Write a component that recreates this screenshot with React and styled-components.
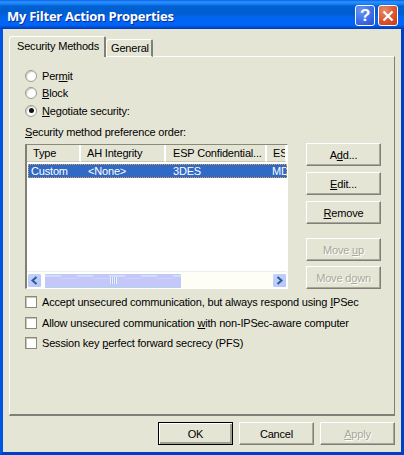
import React from 'react';
import styled, { createGlobalStyle } from 'styled-components';

const GlobalStyle = createGlobalStyle`
    html, body {
        margin: 0;
        padding: 0;
        background: #0055e5;
    }
`;

const Win = styled.div`
    width: 404px;
    height: 455px;
    box-sizing: border-box;
    display: flex;
    flex-direction: column;
    overflow: hidden;
    background: #e5e5d5;
    font-family: "Liberation Sans", Arial, sans-serif;
    font-size: 11px;
    letter-spacing: -0.18px;
    color: #000;
`;

const TitleBar = styled.div`
    height: 29px;
    flex: none;
    box-sizing: border-box;
    display: flex;
    align-items: center;
    gap: 3px;
    padding: 4px 6px 2px 7px;
    background: linear-gradient(180deg, #0a5fe6 0px, #2b93ff 2px, #1a80f5 4px, #0061d2 6px, #005ed0 14px, #0066f0 17px, #0064f8 25px, #0050d8 27px, #0038b0 29px);
`;

const TitleText = styled.div`
    flex: 1;
    color: #fff;
    font-family: "Open Sans", "DejaVu Sans", sans-serif;
    font-weight: 700;
    font-size: 13px;
    letter-spacing: -0.26px;
    text-shadow: 1px 1px 0 #0a2f98;
`;

const CapButton = styled.div`
    width: 18px;
    height: 19px;
    border: 1px solid #fff;
    border-radius: 3px;
    display: flex;
    align-items: center;
    justify-content: center;
    color: #fff;
    font-weight: 700;
    font-size: 17px;
    background: ${p => p.$close
        ? 'radial-gradient(circle at 30% 25%, #e88a6c, #d9502c 60%, #c83a12)'
        : 'radial-gradient(circle at 30% 25%, #6c96f4, #3c6ae4 60%, #2a4fd0)'};
`;

const Body = styled.div`
    flex: 1;
    min-height: 0;
    display: flex;
    flex-direction: column;
    border-left: 3px solid #0055e5;
    border-right: 3px solid #0040c8;
    border-bottom: 3px solid #0040c8;
    padding: 7px 6px 0 6px;
`;

const TabStrip = styled.div`
    display: flex;
    align-items: flex-end;
    height: 21px;
    flex: none;
    position: relative;
    z-index: 1;
    margin-bottom: -1px;
`;

const Tab = styled.div`
    box-sizing: border-box;
    width: ${p => p.$w}px;
    height: ${p => (p.$active ? 21 : 18)}px;
    background: #e5e5d5;
    border-top: 1px solid #fff;
    border-left: 1px solid #fff;
    border-right: 2px solid #808078;
    border-bottom: ${p => (p.$active ? 'none' : '1px solid #fff')};
    border-top-left-radius: 3px;
    border-top-right-radius: 2px;
    padding: ${p => (p.$active ? '2px 0 0 7px' : '1px 0 0 4px')};
    line-height: 14px;
    white-space: nowrap;
`;

const Panel = styled.div`
    flex: 1;
    box-sizing: border-box;
    min-height: 0;
    border-top: 1px solid #fff;
    border-left: 1px solid #fff;
    border-right: 1px solid #808078;
    border-bottom: 2px solid #808078;
    padding: 10px 12px 0 15px;
`;

const RadioRow = styled.div`
    display: flex;
    align-items: center;
    height: 17.5px;
    gap: 5px;
`;

const RadioMark = styled.span`
    box-sizing: border-box;
    width: 12px;
    height: 12px;
    flex: none;
    border-radius: 50%;
    background: #fff;
    border: 1px solid #9a9a8c;
    box-shadow: inset 1px 1px 1px #c8c8bc;
    display: flex;
    align-items: center;
    justify-content: center;

    &::after {
        content: '';
        display: ${p => (p.$on ? 'block' : 'none')};
        width: 5px;
        height: 5px;
        border-radius: 50%;
        background: #111;
    }
`;

const Key = styled.span`
    text-decoration: underline;
`;

const SectionLabel = styled.div`
    margin-top: 5.5px;
    line-height: 14px;
    height: 14px;
`;

const ListRow = styled.div`
    display: flex;
    margin-top: 5px;
    gap: 18px;
`;

const ListBox = styled.div`
    box-sizing: border-box;
    width: 263px;
    height: 145px;
    flex: none;
    background: #fff;
    border-top: 1px solid #8a8a78;
    border-left: 2px solid #808078;
    border-right: 1px solid #fff;
    border-bottom: 1px solid #fff;
    display: flex;
    flex-direction: column;
    overflow: hidden;
`;

const HeaderRow = styled.div`
    height: 17px;
    flex: none;
    display: grid;
    grid-template-columns: 54px 85px 101px 20px;
    background: #e5e5d5;
`;

const HeaderCell = styled.div`
    box-sizing: border-box;
    border-right: 2px solid #fff;
    border-bottom: 1px solid #c8c8b8;
    padding-left: ${p => p.$pad}px;
    line-height: 17px;
    white-space: nowrap;
    overflow: hidden;
`;

const DataRow = styled.div`
    margin: 2px 0 0 1px;
    height: 14px;
    flex: none;
    box-sizing: border-box;
    display: grid;
    grid-template-columns: 53px 85px 101px 20px;
    background: #316ac5;
    color: #fff;
    outline: 1px dotted #e0a040;
    outline-offset: -1px;
    line-height: 14px;
`;

const DataCell = styled.div`
    padding-left: ${p => p.$pad}px;
    white-space: nowrap;
    overflow: hidden;
`;

const ListFill = styled.div`
    flex: 1;
`;

const ScrollBar = styled.div`
    height: 17px;
    flex: none;
    box-sizing: border-box;
    display: flex;
    align-items: stretch;
    padding: 1px 0 0 0;
    border-top: 1px solid #eeeeea;
    background: #fefef6;
    gap: 2px;
`;

const ScrollButton = styled.div`
    width: 15px;
    flex: none;
    box-sizing: border-box;
    border: 1px solid #fff;
    border-radius: 2px;
    background: linear-gradient(135deg, #c6d2fc, #b4c6f6);
    display: flex;
    align-items: center;
    justify-content: center;
`;

const ScrollThumb = styled.div`
    width: 138px;
    flex: none;
    box-sizing: border-box;
    border: 1px solid #fff;
    border-bottom-color: #a8d8e0;
    border-radius: 2px;
    background:
        repeating-linear-gradient(90deg, #c8e4f4 0 16px, #c6c6fa 16px 32px) 0 1px / 100% 2px no-repeat,
        repeating-linear-gradient(90deg, #c6c6fa 0 16px, #c4daf6 16px 32px) 0 4px / 100% 1px no-repeat,
        #c6c6fa;
    display: flex;
    align-items: center;
    justify-content: center;
`;

const ThumbGrip = styled.div`
    width: 7px;
    height: 7px;
    background: repeating-linear-gradient(90deg, #eef2ff 0 1px, #a8bcf0 1px 2px);
`;

const ScrollGap = styled.div`
    flex: 1;
`;

const SideButtons = styled.div`
    display: flex;
    flex-direction: column;
    width: 75px;
    flex: none;
    margin-top: -1px;
`;

const XpButton = styled.div`
    box-sizing: border-box;
    width: 75px;
    height: 23px;
    flex: none;
    margin-top: ${p => p.$mt || 0}px;
    display: flex;
    align-items: center;
    justify-content: center;
    background: #e5e5d5;
    border-top: 1px solid #fff;
    border-left: 1px solid #fff;
    border-right: 1px solid #808078;
    border-bottom: 1px solid #808078;
    box-shadow: inset -1px -1px 0 #a8a898;
    color: ${p => (p.$off ? '#a8a898' : '#000')};
    text-shadow: ${p => (p.$off ? '1px 1px 0 #fff' : 'none')};
    ${p => p.$default && `
        border: 1px solid #000;
        box-shadow: inset 1px 1px 0 #fff, inset -2px -2px 0 #a0a090;
    `}
`;

const CheckList = styled.div`
    display: flex;
    flex-direction: column;
    margin-top: 6px;
`;

const CheckRow = styled.div`
    display: flex;
    align-items: center;
    gap: 5px;
    height: 14px;
    margin-bottom: 6.5px;
    white-space: nowrap;
`;

const CheckMark = styled.span`
    box-sizing: border-box;
    width: 12px;
    height: 12px;
    flex: none;
    background: #fff;
    border: 1px solid #8a8a78;
    box-shadow: inset 1px 1px 0 #c8c8b8;
`;

const Footer = styled.div`
    height: 36px;
    flex: none;
    display: flex;
    justify-content: flex-end;
    gap: 6px;
    padding-top: 6px;
    box-sizing: border-box;
`;

const Chevron = ({ right }) => (
    <svg width="9" height="9" viewBox="0 0 9 9">
        <path
            d={right ? 'M2.5 1 L6.5 4.5 L2.5 8' : 'M6.5 1 L2.5 4.5 L6.5 8'}
            fill="none"
            stroke="#2c5a98"
            strokeWidth="2"
        />
    </svg>
);

const columns = [
    { text: 'Type', pad: 6 },
    { text: 'AH Integrity', pad: 6 },
    { text: 'ESP Confidential...', pad: 7 },
    { text: 'ES', pad: 6 },
];

const cells = [
    { text: 'Custom', pad: 3 },
    { text: '<None>', pad: 7 },
    { text: '3DES', pad: 7 },
    { text: 'MD', pad: 5 },
];

const App = () => {
    return (
        <>
            <GlobalStyle />
            <Win>
                <TitleBar>
                    <TitleText>My Filter Action Properties</TitleText>
                    <CapButton>?</CapButton>
                    <CapButton $close>
                        <svg width="12" height="12" viewBox="0 0 12 12">
                            <path d="M1.5 1.5 L10.5 10.5 M10.5 1.5 L1.5 10.5" stroke="#fff" strokeWidth="2.2" />
                        </svg>
                    </CapButton>
                </TitleBar>
                <Body>
                    <TabStrip>
                        <Tab $active $w={97}>Security Methods</Tab>
                        <Tab $w={47}>General</Tab>
                    </TabStrip>
                    <Panel>
                        <RadioRow><RadioMark /><span>Per<Key>m</Key>it</span></RadioRow>
                        <RadioRow><RadioMark /><span><Key>B</Key>lock</span></RadioRow>
                        <RadioRow><RadioMark $on /><span><Key>N</Key>egotiate security:</span></RadioRow>
                        <SectionLabel><Key>S</Key>ecurity method preference order:</SectionLabel>
                        <ListRow>
                            <ListBox>
                                <HeaderRow>
                                    {columns.map(c => (
                                        <HeaderCell key={c.text} $pad={c.pad}>{c.text}</HeaderCell>
                                    ))}
                                </HeaderRow>
                                <DataRow>
                                    {cells.map(c => (
                                        <DataCell key={c.text} $pad={c.pad}>{c.text}</DataCell>
                                    ))}
                                </DataRow>
                                <ListFill />
                                <ScrollBar>
                                    <ScrollButton><Chevron /></ScrollButton>
                                    <ScrollThumb><ThumbGrip /></ScrollThumb>
                                    <ScrollGap />
                                    <ScrollButton><Chevron right /></ScrollButton>
                                </ScrollBar>
                            </ListBox>
                            <SideButtons>
                                <XpButton><span>A<Key>d</Key>d...</span></XpButton>
                                <XpButton $mt={6}><span><Key>E</Key>dit...</span></XpButton>
                                <XpButton $mt={6}><span><Key>R</Key>emove</span></XpButton>
                                <XpButton $mt={14} $off><span>Move <Key>u</Key>p</span></XpButton>
                                <XpButton $mt={5} $off><span>Move d<Key>o</Key>wn</span></XpButton>
                            </SideButtons>
                        </ListRow>
                        <CheckList>
                            <CheckRow><CheckMark /><span>Accept unsecured communication, but always respond using <Key>I</Key>PSec</span></CheckRow>
                            <CheckRow><CheckMark /><span>Allow unsecured communication <Key>w</Key>ith non-IPSec-aware computer</span></CheckRow>
                            <CheckRow><CheckMark /><span>Session key <Key>p</Key>erfect forward secrecy (PFS)</span></CheckRow>
                        </CheckList>
                    </Panel>
                    <Footer>
                        <XpButton $default>OK</XpButton>
                        <XpButton>Cancel</XpButton>
                        <XpButton $off><span><Key>A</Key>pply</span></XpButton>
                    </Footer>
                </Body>
            </Win>
        </>
    );
};

export default App;
